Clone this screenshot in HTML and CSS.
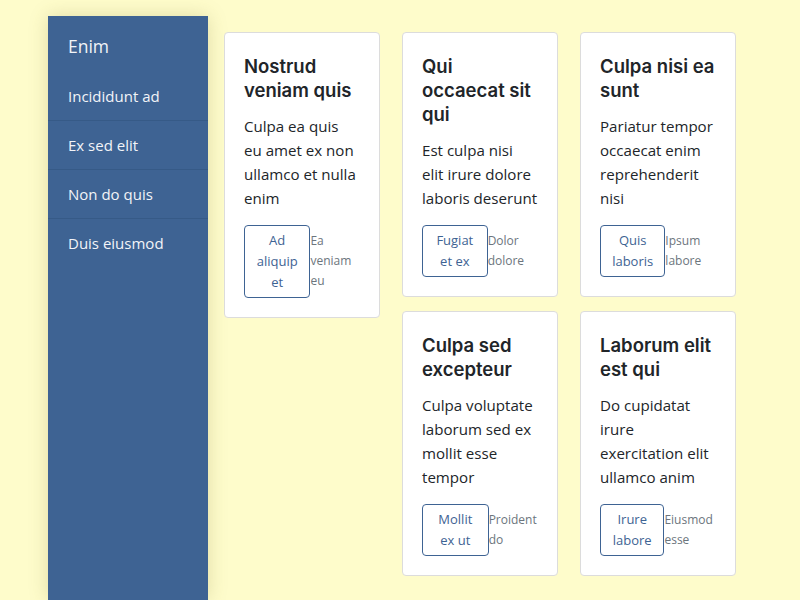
FILE: index.html
```html
<!DOCTYPE html>
<html lang="en">
<head>
<meta charset="utf-8">
<title>Enim</title>
<link rel="stylesheet" href="styles.css">
</head>
<body>
<div class="page">
  <nav class="sidebar">
    <div class="sidebar-title">Enim</div>
    <ul class="nav">
      <li class="nav-item">Incididunt ad</li>
      <li class="nav-item">Ex sed elit</li>
      <li class="nav-item">Non do quis</li>
      <li class="nav-item">Duis eiusmod</li>
    </ul>
  </nav>
  <main class="main">
    <div class="col">
      <div class="card">
        <h2 class="card-title">Nostrud veniam quis</h2>
        <p class="card-text">Culpa ea quis eu amet ex non ullamco et nulla enim</p>
        <div class="card-actions">
          <button class="btn">Ad aliquip et</button>
          <span class="meta">Ea veniam eu</span>
        </div>
      </div>
    </div>
    <div class="col">
      <div class="card">
        <h2 class="card-title">Qui occaecat sit qui</h2>
        <p class="card-text">Est culpa nisi elit irure dolore laboris deserunt</p>
        <div class="card-actions">
          <button class="btn">Fugiat et ex</button>
          <span class="meta">Dolor dolore</span>
        </div>
      </div>
      <div class="card">
        <h2 class="card-title">Culpa sed excepteur</h2>
        <p class="card-text">Culpa voluptate laborum sed ex mollit esse tempor</p>
        <div class="card-actions">
          <button class="btn">Mollit ex ut</button>
          <span class="meta">Proident do</span>
        </div>
      </div>
    </div>
    <div class="col">
      <div class="card">
        <h2 class="card-title">Culpa nisi ea sunt</h2>
        <p class="card-text">Pariatur tempor occaecat enim reprehenderit nisi</p>
        <div class="card-actions">
          <button class="btn">Quis laboris</button>
          <span class="meta">Ipsum labore</span>
        </div>
      </div>
      <div class="card">
        <h2 class="card-title">Laborum elit est qui</h2>
        <p class="card-text">Do cupidatat irure exercitation elit ullamco anim</p>
        <div class="card-actions">
          <button class="btn">Irure labore</button>
          <span class="meta">Eiusmod esse</span>
        </div>
      </div>
    </div>
  </main>
</div>
</body>
</html>
```

FILE: styles.css
```css
* { box-sizing: border-box; }
html, body { margin: 0; padding: 0; }
body {
  background: #fefccb;
  font-family: "Open Sans", "Noto Sans", sans-serif;
  color: #212529;
}
.page {
  display: flex;
  align-items: flex-start;
  padding: 16px 48px 0;
  min-height: 100vh;
}
.sidebar {
  width: 160px;
  flex: 0 0 160px;
  min-height: calc(100vh - 16px);
  background: #3e6393;
  color: #f2f4f8;
  box-shadow: 0 0 18px rgba(120, 110, 40, 0.22);
}
.sidebar-title {
  padding: 16px 20px 12px;
  font-size: 17.5px;
  line-height: 28px;
}
.nav { list-style: none; margin: 0; padding: 0; }
.nav-item {
  padding: 12px 20px;
  font-size: 15px;
  line-height: 24px;
  border-bottom: 1px solid #365a87;
}
.nav-item:last-child { border-bottom: none; }
.main {
  flex: 1;
  padding: 16px;
  display: grid;
  grid-template-columns: repeat(3, 1fr);
  column-gap: 22px;
  align-items: start;
}
.col {
  display: flex;
  flex-direction: column;
  gap: 14px;
}
.card {
  background: #fff;
  border: 1px solid #dcdcdc;
  border-radius: 4px;
  padding: 21px 19px 19px;
}
.card-title {
  margin: 0 0 12px;
  font-family: Inter, "Open Sans", sans-serif;
  font-size: 18.5px;
  font-weight: 600;
  line-height: 24px;
}
.card-text {
  margin: 0 0 15px;
  font-size: 15.1px;
  line-height: 24px;
}
.card-actions {
  display: flex;
  align-items: baseline;
}
.btn {
  font-family: inherit;
  font-size: 13px;
  line-height: 21px;
  color: #3e6393;
  background: #fff;
  border: 1px solid #3e6393;
  border-radius: 4px;
  padding: 4px 7px;
  text-align: center;
}
.meta {
  font-size: 12px;
  line-height: 20px;
  color: #6c757d;
}
```
